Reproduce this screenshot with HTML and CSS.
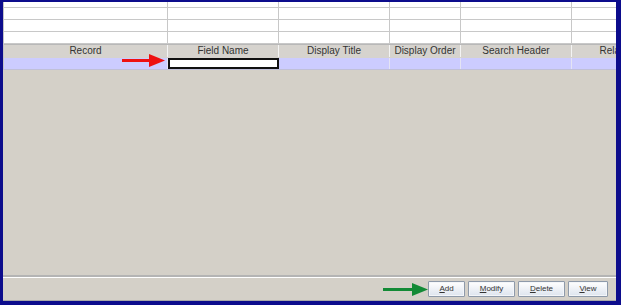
FILE: index.html
```html
<!DOCTYPE html>
<html lang="en">
<head>
    <meta charset="UTF-8">
    <meta name="viewport" content="width=device-width, initial-scale=1.0">
    <title>Fields</title>
    <link rel="stylesheet" href="styles.css">
</head>
<body>
    <div class="frame">
        <div class="table">
            <div class="row row-top">
                <div class="cell"></div><div class="cell"></div><div class="cell"></div>
                <div class="cell"></div><div class="cell"></div><div class="cell"></div>
            </div>
            <div class="row">
                <div class="cell"></div><div class="cell"></div><div class="cell"></div>
                <div class="cell"></div><div class="cell"></div><div class="cell"></div>
            </div>
            <div class="row">
                <div class="cell"></div><div class="cell"></div><div class="cell"></div>
                <div class="cell"></div><div class="cell"></div><div class="cell"></div>
            </div>
            <div class="row">
                <div class="cell"></div><div class="cell"></div><div class="cell"></div>
                <div class="cell"></div><div class="cell"></div><div class="cell"></div>
            </div>
            <div class="row header">
                <div class="head">Record</div>
                <div class="head">Field Name</div>
                <div class="head">Display Title</div>
                <div class="head">Display Order</div>
                <div class="head">Search Header</div>
                <div class="head">Relationship</div>
            </div>
            <div class="row selected">
                <div class="cell"></div>
                <div class="cell editing"></div>
                <div class="cell"></div>
                <div class="cell"></div>
                <div class="cell"></div>
                <div class="cell"></div>
            </div>
        </div>

        <div class="empty"></div>

        <div class="button-bar">
            <button class="btn"><u>A</u>dd</button>
            <button class="btn"><u>M</u>odify</button>
            <button class="btn"><u>D</u>elete</button>
            <button class="btn"><u>V</u>iew</button>
        </div>

        <!-- annotation arrows -->
        <svg class="arrow arrow-red" width="44" height="14" viewBox="0 0 44 14">
            <rect x="0" y="5" width="28" height="3" fill="#ee1111"/>
            <polygon points="27,0 43,6.5 27,13" fill="#ee1111"/>
        </svg>
        <svg class="arrow arrow-green" width="46" height="14" viewBox="0 0 46 14">
            <rect x="0" y="5" width="30" height="3" fill="#138a36"/>
            <polygon points="29,0 45,6.5 29,13" fill="#138a36"/>
        </svg>
    </div>
</body>
</html>
```

FILE: styles.css
```css
body {
    margin: 0;
    padding: 0;
    font-family: 'Liberation Sans', Arial, sans-serif;
}

.frame {
    position: relative;
    width: 613px;
    height: 299px;
    border-top: 2px solid #0c0c8c;
    border-left: 3px solid #0c0c8c;
    border-right: 5px solid #0c0c8c;
    border-bottom: 4px solid #0c0c8c;
    background-color: #d4d0c8;
    display: flex;
    flex-direction: column;
    overflow: hidden;
}

.table {
    border-left: 1px solid #c4c4c4;
    width: 760px;
}

.row {
    display: grid;
    grid-template-columns: 164px 111px 111px 71px 111px 111px;
    height: 11px;
    background-color: #ffffff;
    border-bottom: 1px solid #c8c8c8;
}

.row-top {
    height: 5px;
}

.cell {
    border-right: 1px solid #c8c8c8;
}

.header {
    height: 12px;
    background-color: #d6d3ce;
    border-top: 1px solid #b8b8b8;
    border-bottom: 1px solid #d6d3ce;
}

.head {
    border-right: 1px solid #f4f4f4;
    text-align: center;
    font-size: 10px;
    line-height: 12px;
    color: #333333;
    white-space: nowrap;
}

.selected {
    height: 11px;
    background-color: #ccccff;
    border-bottom: 1px solid #c0c0d8;
}

.selected .cell {
    border-right: 1px solid #e4e4f4;
}

.editing {
    background-color: #ffffff;
    border: 2px solid #111111 !important;
    height: 7px;
}

.empty {
    flex-grow: 1;
    border-bottom: 2px solid #b4b4b4;
    box-shadow: 0 1px 0 #ffffff;
}

.button-bar {
    height: 23px;
    display: flex;
    justify-content: flex-end;
    align-items: center;
    gap: 3px;
    padding-right: 8px;
    border-bottom: 1px solid #a8a8a8;
}

.btn {
    height: 16px;
    min-width: 37px;
    padding: 0 8px;
    font-family: 'Liberation Sans', Arial, sans-serif;
    font-size: 8px;
    color: #333333;
    background: linear-gradient(#ffffff, #dde4ee);
    border: 1px solid #8e9aaa;
    border-radius: 1px;
    box-shadow: inset 0 0 0 1px #f4f6f9;
}

.btn:nth-child(2),
.btn:nth-child(3) {
    width: 47px;
}

.btn:nth-child(4) {
    width: 40px;
}

.arrow {
    position: absolute;
}

.arrow-red {
    left: 119px;
    top: 52px;
}

.arrow-green {
    left: 380px;
    top: 281px;
}
```
